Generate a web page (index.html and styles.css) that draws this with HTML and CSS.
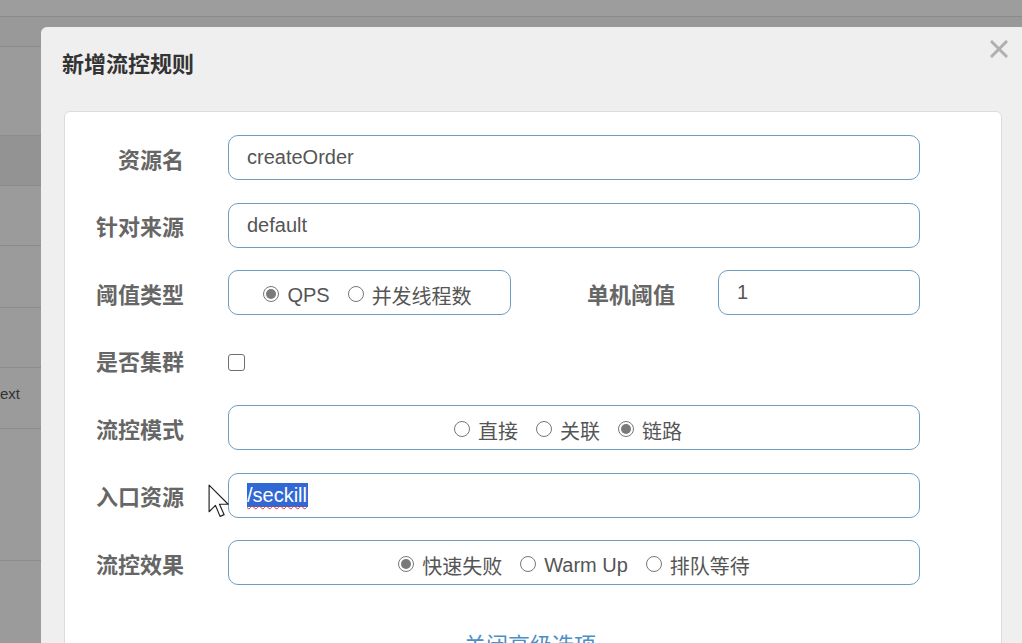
FILE: index.html
```html
<!DOCTYPE html>
<html lang="zh">
<head>
<meta charset="utf-8">
<title>新增流控规则</title>
<link rel="stylesheet" href="styles.css">
</head>
<body>
<div class="page">
  <div class="bg-row h16"></div>
  <div class="bg-row h30"></div>
  <div class="bg-row h89"></div>
  <div class="bg-row h50 dark"></div>
  <div class="bg-row h60"></div>
  <div class="bg-row h62"></div>
  <div class="bg-row h60"></div>
  <div class="bg-row h61"><span class="bg-text">ext</span></div>
  <div class="bg-row h132"></div>
  <div class="bg-row rest"></div>
</div>

<div class="modal">
  <div class="modal-header">
    <h4 class="modal-title">新增流控规则</h4>
    <svg class="close" width="18" height="18" viewBox="0 0 18 18"><path d="M2 2L16 16M16 2L2 16" stroke="#b0b0b0" stroke-width="3" stroke-linecap="square"/></svg>
  </div>
  <div class="card">
    <div class="form">
      <div class="label">资源名</div>
      <div class="field input"><span>createOrder</span></div>

      <div class="label">针对来源</div>
      <div class="field input"><span>default</span></div>

      <div class="label">阈值类型</div>
      <div class="split">
        <div class="field group small">
          <span class="radio on"></span><span class="rtext">QPS</span>
          <span class="radio"></span><span class="rtext">并发线程数</span>
        </div>
        <div class="label inner">单机阈值</div>
        <div class="field input threshold"><span>1</span></div>
      </div>

      <div class="label">是否集群</div>
      <div class="check-cell"><span class="checkbox"></span></div>

      <div class="label">流控模式</div>
      <div class="field group shifted">
        <span class="radio"></span><span class="rtext">直接</span>
        <span class="radio"></span><span class="rtext">关联</span>
        <span class="radio on"></span><span class="rtext">链路</span>
      </div>

      <div class="label">入口资源</div>
      <div class="field input"><span class="selected">/seckill</span></div>

      <div class="label">流控效果</div>
      <div class="field group">
        <span class="radio on"></span><span class="rtext">快速失败</span>
        <span class="radio"></span><span class="rtext">Warm Up</span>
        <span class="radio"></span><span class="rtext">排队等待</span>
      </div>
    </div>
    <div class="advanced"><a class="link">关闭高级选项</a></div>
  </div>
</div>

<svg class="cursor" width="27" height="37" viewBox="0 0 20 32">
  <path d="M1 1 L1 24 L6.5 18.5 L10.5 28 L14 26.5 L10 17.5 L17.5 17.5 Z" fill="#ffffff" stroke="#222" stroke-width="1" stroke-linejoin="round"/>
</svg>
</body>
</html>
```

FILE: styles.css
```css
* { box-sizing: border-box; }
html, body {
  margin: 0;
  padding: 0;
  width: 1022px;
  height: 643px;
  overflow: hidden;
  background: #9b9b9b;
  font-family: "Liberation Sans", "Noto Sans CJK SC", sans-serif;
}
.page {
  display: flex;
  flex-direction: column;
  height: 643px;
}
.bg-row {
  border-bottom: 1px solid #8b8b8b;
  display: flex;
  align-items: center;
}
.bg-row.h16 { height: 17px; background: #9d9d9d; }
.bg-row.h30 { height: 30px; background: #999999; }
.bg-row.h89 { height: 89px; }
.bg-row.h50 { height: 50px; }
.bg-row.dark { background: #939393; }
.bg-row.h60 { height: 60px; }
.bg-row.h62 { height: 62px; }
.bg-row.h61 { height: 61px; }
.bg-row.h132 { height: 132px; }
.bg-row.rest { flex: 1; border-bottom: none; }
.bg-text {
  font-size: 15px;
  color: #333;
  margin-top: -10px;
}

.modal {
  position: absolute;
  left: 41px;
  top: 27px;
  width: 1000px;
  height: 640px;
  background: #efefef;
  border-top-left-radius: 6px;
}
.modal-header {
  display: flex;
  align-items: flex-start;
  justify-content: space-between;
  padding: 13px 0 0 21px;
  height: 84px;
}
.modal-title {
  margin: 7px 0 0 0;
  font-size: 22px;
  line-height: 30px;
  font-weight: bold;
  color: #333;
  font-family: "Noto Sans CJK SC", sans-serif;
}
.close {
  margin: 0 33px 0 0;
}
.card {
  margin-left: 23px;
  width: 938px;
  height: 560px;
  background: #fff;
  border: 1px solid #dcdcdc;
  border-radius: 6px;
  padding-top: 23px;
}
.form {
  display: grid;
  grid-template-columns: 119px 692px;
  column-gap: 44px;
  row-gap: 22.5px;
  grid-auto-rows: 45px;
}
.label {
  font-family: "Noto Sans CJK SC", sans-serif;
  font-size: 22px;
  font-weight: bold;
  color: #666;
  text-align: right;
  display: flex;
  align-items: center;
  justify-content: flex-end;
}
.field {
  border: 1px solid #6f9dbf;
  border-radius: 10px;
  height: 45px;
  display: flex;
  align-items: center;
  font-size: 20px;
  color: #555;
  background: #fff;
}
.input { padding-left: 18px; }
.group {
  justify-content: center;
  padding-top: 5px;
}
.group.shifted { padding-right: 12px; }
.group.small { width: 283px; padding-right: 4px; }
.split {
  display: flex;
  align-items: center;
}
.label.inner {
  width: 164px;
  height: 45px;
}
.threshold {
  margin-left: 43px;
  width: 202px;
}
.radio {
  width: 16px;
  height: 16px;
  border: 1px solid #777;
  border-radius: 50%;
  background: #fff;
  display: inline-flex;
  align-items: center;
  justify-content: center;
  margin-right: 8px;
  margin-top: -2px;
  flex: none;
}
.radio.on::after {
  content: "";
  width: 10px;
  height: 10px;
  border-radius: 50%;
  background: #7a7a7a;
}
.rtext { margin-right: 18px; }
.rtext:last-child { margin-right: 0; }
.check-cell {
  display: flex;
  align-items: center;
}
.checkbox {
  width: 17px;
  height: 17px;
  border: 1.5px solid #6f6f6f;
  border-radius: 3px;
  background: #fff;
  margin-top: 4px;
}
.selected {
  background: #3168d4;
  color: #fff;
  line-height: 24px;
  padding: 0 1px 0 0;
  text-decoration: underline wavy #d33;
  text-decoration-thickness: 1px;
  text-underline-offset: 3px;
}
.advanced {
  text-align: center;
  margin-top: 42px;
  padding-right: 6px;
}
.link {
  font-family: "Noto Sans CJK SC", sans-serif;
  font-size: 22px;
  color: #4a8fc6;
}
.cursor {
  position: absolute;
  left: 206px;
  top: 484px;
}
```
